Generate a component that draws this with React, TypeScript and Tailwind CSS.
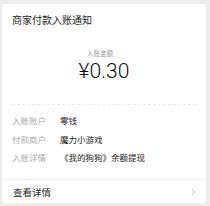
import React from "react";

const cjk = { fontFamily: '"Noto Sans CJK SC", "Noto Sans", sans-serif' };

function Row({ label, value }: { label: string; value: string }) {
  return (
    <div className="flex h-[18.5px] items-center px-[10px]">
      <div className="w-[48px] text-[8.5px] leading-[12px] text-[#ababab]">{label}</div>
      <div className="text-[8.5px] leading-[12px] text-[#1e1e1e]">{value}</div>
    </div>
  );
}

export default function App() {
  return (
    <div className="h-[206px] w-[210px] bg-[#ededed] pl-[2px] pt-[4px]" style={cjk}>
      <div className="flex h-[199px] w-[204px] flex-col rounded-[3px] bg-white">
        <div className="mt-[9px] px-[10px] text-[10px] leading-[14px] text-[#1a1a1a]">商家付款入账通知</div>
        <div className="mt-[21px] pr-[8px] text-center text-[6.5px] leading-[10px] text-[#a0a0a0]">入账金额</div>
        <div
          className="mt-[1px] text-center text-[21px] font-light leading-[24px] text-[#111]"
          style={{ fontFamily: "Roboto, 'Noto Sans', sans-serif" }}
        >
          ¥0.30
        </div>
        <div className="mx-[10px] mt-[21px] border-t border-dashed border-[#ececec]" />
        <div className="mt-[6px] flex flex-col">
          <Row label="入账账户" value="零钱" />
          <Row label="付款商户" value="魔力小游戏" />
          <Row label="入账详情" value="《我的狗狗》余额提现" />
        </div>
        <div className="mt-[12.5px] border-t border-[#efefef]" />
        <div className="flex flex-1 items-center justify-between pl-[11px] pr-[10px]">
          <div className="text-[9.5px] leading-[12px] text-[#1e1e1e]">查看详情</div>
          <svg width="5" height="8" viewBox="0 0 5 8" fill="none">
            <path d="M0.8 0.8 L4 4 L0.8 7.2" stroke="#c8c8c8" strokeWidth="1" />
          </svg>
        </div>
      </div>
    </div>
  );
}
